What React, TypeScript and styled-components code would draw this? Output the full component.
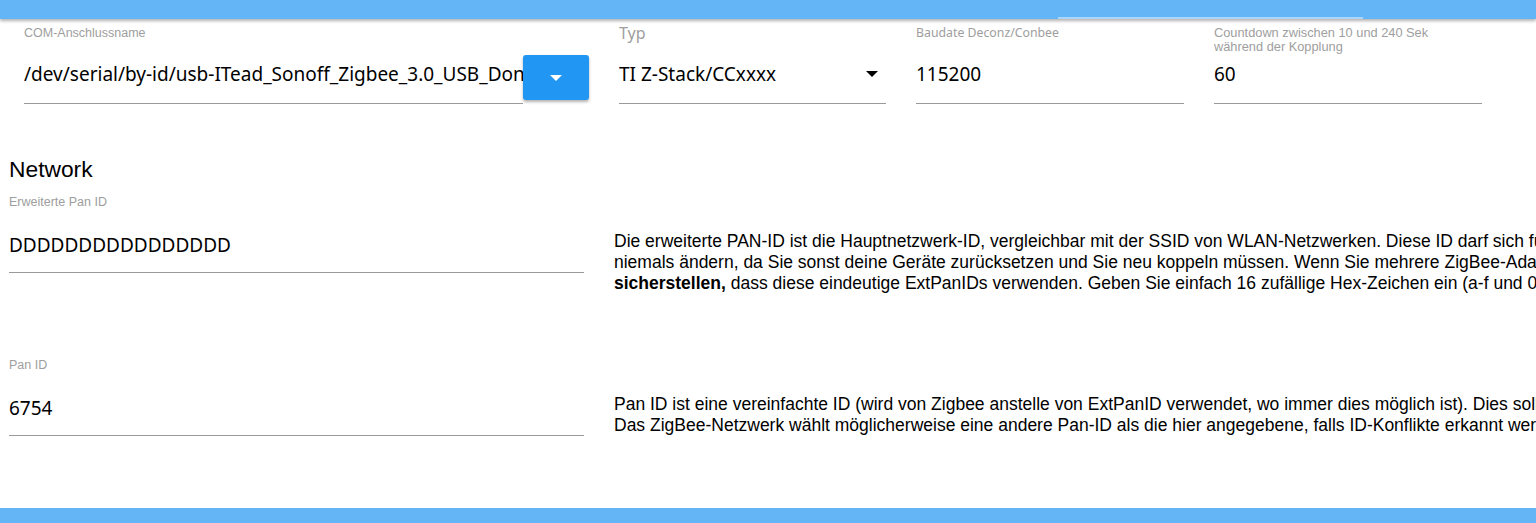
import React from 'react';
import styled, { createGlobalStyle } from 'styled-components';

const GlobalStyle = createGlobalStyle`
  html, body {
    margin: 0;
    padding: 0;
    background: #fff;
    overflow: hidden;
  }
`;

const Page = styled.div`
  display: flex;
  flex-direction: column;
  height: 100vh;
  width: 100vw;
  overflow: hidden;
`;

const TopBar = styled.div`
  height: 19px;
  flex-shrink: 0;
  display: flex;
  align-items: flex-end;
  padding-left: 1058px;
  background-color: #64b5f6;
  box-shadow: 0 2px 3px rgba(0, 0, 0, 0.3);
  position: relative;
  z-index: 1;
`;

const TabIndicator = styled.div`
  width: 305px;
  height: 2px;
  background-color: #a9d6fa;
`;

const Content = styled.div`
  flex: 1;
  overflow: hidden;
`;

const BottomBar = styled.div`
  height: 15px;
  flex-shrink: 0;
  background-color: #64b5f6;
`;

const TopRow = styled.div`
  display: flex;
  align-items: flex-start;
  gap: 30px;
  padding: 7px 24px 0 24px;
`;

const Field = styled.div<{ $width: number }>`
  display: flex;
  flex-direction: column;
  width: ${(p) => p.$width}px;
  flex-shrink: 0;
`;

const Label = styled.div<{ $size?: number; $segoe?: boolean }>`
  min-height: 28px;
  font-family: ${(p) => (p.$segoe ? '"Noto Sans", sans-serif' : '"Liberation Sans", Arial, sans-serif')};
  font-size: ${(p) => p.$size || 12.5}px;
  line-height: 14px;
  color: #9e9e9e;
  white-space: nowrap;
`;

const InputRow = styled.div`
  display: flex;
  align-items: flex-start;
`;

const Input = styled.div<{ $pad?: number; $grow?: boolean }>`
  flex: ${(p) => (p.$grow ? '1 1 0' : 'none')};
  display: flex;
  align-items: flex-start;
  justify-content: space-between;
  box-sizing: border-box;
  height: 50px;
  padding-top: ${(p) => p.$pad || 8}px;
  border-bottom: 1px solid #9a9a9a;
  font-family: "Noto Sans", "Open Sans", sans-serif;
  font-size: 19px;
  line-height: 24px;
  color: #000;
  white-space: nowrap;
  overflow: hidden;
  min-width: 0;
`;

const Caret = styled.span<{ $color: string }>`
  display: inline-block;
  width: 0;
  height: 0;
  border-left: 6px solid transparent;
  border-right: 6px solid transparent;
  border-top: 6px solid ${(p) => p.$color};
`;

const SelectCaret = styled(Caret)`
  margin: 9px 8px 0 0;
`;

const DropButton = styled.button`
  width: 66px;
  height: 45px;
  margin-top: 1px;
  flex-shrink: 0;
  display: flex;
  align-items: center;
  justify-content: center;
  border: none;
  border-radius: 3px;
  background-color: #2196f3;
  box-shadow: 0 2px 3px rgba(0, 0, 0, 0.3);
  cursor: pointer;
`;

const Section = styled.div`
  padding: 52px 0 0 9px;
`;

const Heading = styled.div`
  font-family: "Liberation Sans", Arial, sans-serif;
  font-size: 22.8px;
  line-height: 26px;
  color: #000;
  margin-bottom: 13px;
`;

const SettingRow = styled.div`
  display: flex;
  align-items: flex-start;
  gap: 30px;
  min-height: 163px;
`;

const Description = styled.div`
  padding-top: 36px;
  font-family: "Liberation Sans", Arial, sans-serif;
  font-size: 17.5px;
  line-height: 21px;
  color: #000;
  white-space: nowrap;

  b {
    font-weight: bold;
  }
`;

export default function App() {
  return (
    <Page>
      <GlobalStyle />
      <TopBar>
        <TabIndicator />
      </TopBar>
      <Content>
        <TopRow>
          <Field $width={565}>
            <Label>COM-Anschlussname</Label>
            <InputRow>
              <Input $grow>/dev/serial/by-id/usb-ITead_Sonoff_Zigbee_3.0_USB_Dongle_Plus</Input>
              <DropButton>
                <Caret $color="#fff" />
              </DropButton>
            </InputRow>
          </Field>
          <Field $width={267}>
            <Label $segoe $size={16}>Typ</Label>
            <Input>
              TI Z-Stack/CCxxxx
              <SelectCaret $color="#000" />
            </Input>
          </Field>
          <Field $width={268}>
            <Label $segoe $size={12.3}>Baudate Deconz/Conbee</Label>
            <Input>115200</Input>
          </Field>
          <Field $width={268}>
            <Label $size={12.8}>
              Countdown zwischen 10 und 240 Sek
              <br />
              während der Kopplung
            </Label>
            <Input>60</Input>
          </Field>
        </TopRow>
        <Section>
          <Heading>Network</Heading>
          <SettingRow>
            <Field $width={575}>
              <Label>Erweiterte Pan ID</Label>
              <Input $pad={10}>DDDDDDDDDDDDDDDD</Input>
            </Field>
            <Description>
              Die erweiterte PAN-ID ist die Hauptnetzwerk-ID, vergleichbar mit der SSID von WLAN-Netzwerken. Diese ID darf sich für ein bestehendes Netzwerk
              <br />
              niemals ändern, da Sie sonst deine Geräte zurücksetzen und Sie neu koppeln müssen. Wenn Sie mehrere ZigBee-Adapter verwenden, <b>müssen Sie</b>
              <br />
              <b>sicherstellen,</b> dass diese eindeutige ExtPanIDs verwenden. Geben Sie einfach 16 zufällige Hex-Zeichen ein (a-f und 0-9).
            </Description>
          </SettingRow>
          <SettingRow>
            <Field $width={575}>
              <Label>Pan ID</Label>
              <Input $pad={10}>6754</Input>
            </Field>
            <Description>
              Pan ID ist eine vereinfachte ID (wird von Zigbee anstelle von ExtPanID verwendet, wo immer dies möglich ist). Dies sollte eindeutig sein.
              <br />
              Das ZigBee-Netzwerk wählt möglicherweise eine andere Pan-ID als die hier angegebene, falls ID-Konflikte erkannt werden.
            </Description>
          </SettingRow>
        </Section>
      </Content>
      <BottomBar />
    </Page>
  );
}
